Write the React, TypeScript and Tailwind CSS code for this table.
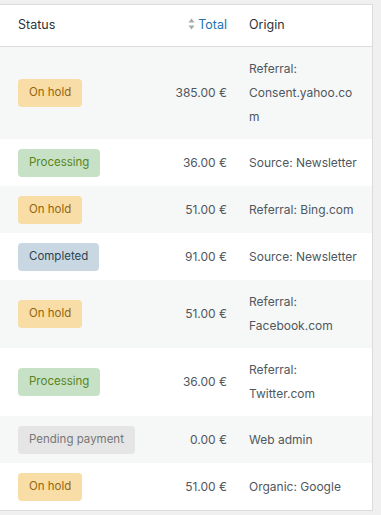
import React from 'react';

type Status = 'on-hold' | 'processing' | 'completed' | 'pending';

const badgeStyles: Record<Status, { label: string; cls: string }> = {
    'on-hold': { label: 'On hold', cls: 'bg-[#f8dda7] text-[#94660c]' },
    processing: { label: 'Processing', cls: 'bg-[#c6e1c6] text-[#5b841b]' },
    completed: { label: 'Completed', cls: 'bg-[#c8d7e1] text-[#2e4453]' },
    pending: { label: 'Pending payment', cls: 'bg-[#e5e5e5] text-[#777777]' },
};

const orders: { status: Status; total: string; origin: string }[] = [
    { status: 'on-hold', total: '385.00 €', origin: 'Referral: Consent.yahoo.com' },
    { status: 'processing', total: '36.00 €', origin: 'Source: Newsletter' },
    { status: 'on-hold', total: '51.00 €', origin: 'Referral: Bing.com' },
    { status: 'completed', total: '91.00 €', origin: 'Source: Newsletter' },
    { status: 'on-hold', total: '51.00 €', origin: 'Referral: Facebook.com' },
    { status: 'processing', total: '36.00 €', origin: 'Referral: Twitter.com' },
    { status: 'pending', total: '0.00 €', origin: 'Web admin' },
    { status: 'on-hold', total: '51.00 €', origin: 'Organic: Google' },
];

function SortIcon() {
    return (
        <svg width="7" height="12" viewBox="0 0 7 12" className="inline-block mr-[3px] align-[-1px]">
            <path d="M3.5 0.5 L6.5 4.5 L0.5 4.5 Z" fill="#a7aaad" />
            <path d="M3.5 11.5 L6.5 7.5 L0.5 7.5 Z" fill="#a7aaad" />
        </svg>
    );
}

function StatusBadge({ status }: { status: Status }) {
    const s = badgeStyles[status];
    return (
        <mark className={`inline-flex items-center h-[28px] px-[11px] rounded-[4px] whitespace-nowrap text-[11.5px] ${s.cls}`}>
            {s.label}
        </mark>
    );
}

export default function App() {
    return (
        <div className="w-[381px] h-[515px] overflow-hidden bg-[#f0f0f1] pt-[4px] font-['Inter','Noto_Sans',sans-serif] text-[12px]">
            <table className="table-fixed w-[373px] border-collapse bg-white border-t border-r border-[#dcdcde]">
                <colgroup>
                    <col className="w-[140px]" />
                    <col className="w-[97px]" />
                    <col />
                </colgroup>
                <thead>
                    <tr className="h-[42px] border-b border-[#dcdcde] text-[12.5px]">
                        <th className="text-left font-normal text-[#2c3338] pl-[18px]">Status</th>
                        <th className="text-right font-normal pr-[10px]">
                            <span className="text-[#2271b1]">
                                <SortIcon />
                                Total
                            </span>
                        </th>
                        <th className="text-left font-normal text-[#2c3338] pl-[12px]">Origin</th>
                    </tr>
                </thead>
                <tbody className="text-[#50575e] leading-[24px]">
                    {orders.map((o, i) => (
                        <tr key={i} className={i % 2 === 0 ? 'bg-[#f6f7f7]' : 'bg-white'}>
                            <td className="pl-[18px] py-[9.5px] align-middle leading-none">
                                <StatusBadge status={o.status} />
                            </td>
                            <td className="text-right pr-[10px] py-[10px] align-middle whitespace-nowrap">{o.total}</td>
                            <td className="pl-[12px] pr-[14px] py-[10px] align-middle break-words">{o.origin}</td>
                        </tr>
                    ))}
                    <tr className="h-px bg-[#dcdcde]">
                        <td colSpan={3} className="p-0 h-px" />
                    </tr>
                </tbody>
            </table>
        </div>
    );
}
